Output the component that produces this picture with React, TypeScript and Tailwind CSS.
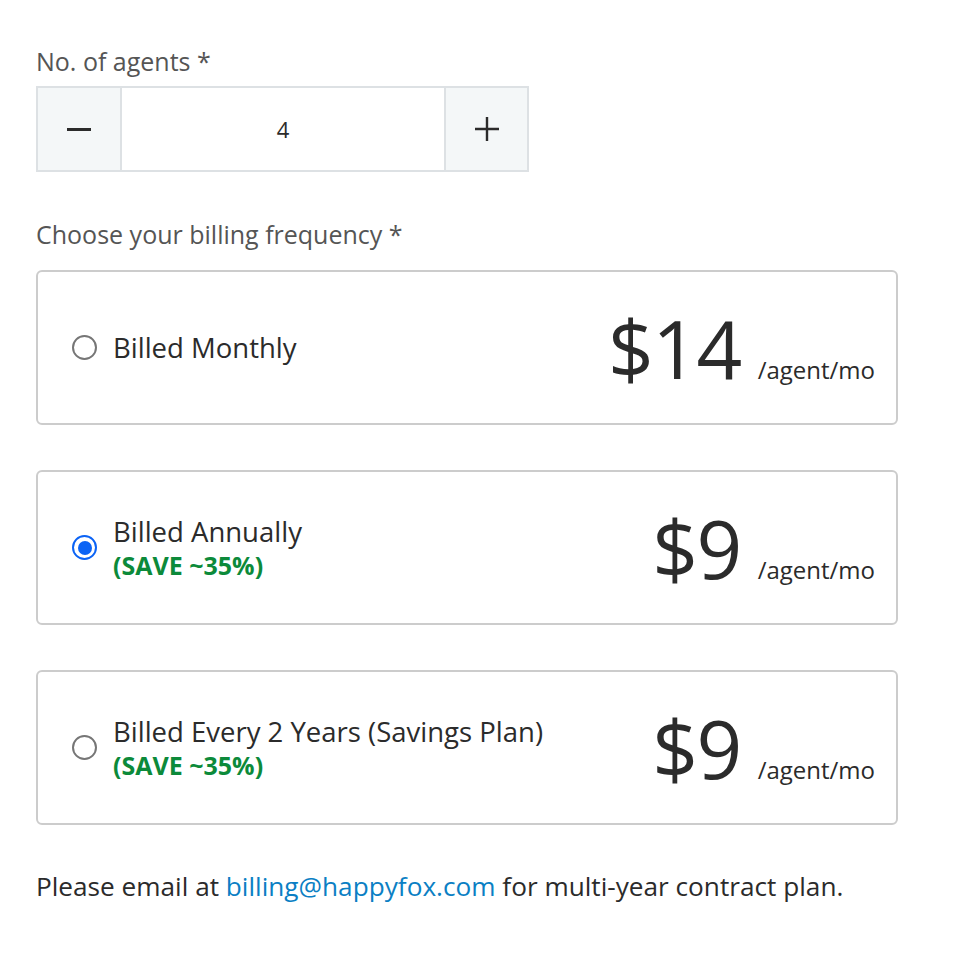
import { useState } from 'react';

const plans = [
  { id: 'monthly', label: 'Billed Monthly', save: '', price: '$14' },
  { id: 'annual', label: 'Billed Annually', save: '(SAVE ~35%)', price: '$9' },
  { id: 'biennial', label: 'Billed Every 2 Years (Savings Plan)', save: '(SAVE ~35%)', price: '$9' },
];

function Radio({ checked }: { checked: boolean }) {
  return checked ? (
    <span className="flex h-[25px] w-[25px] shrink-0 items-center justify-center rounded-full border-[2.5px] border-[#0b63f5]">
      <span className="h-[14px] w-[14px] rounded-full bg-[#0b63f5]" />
    </span>
  ) : (
    <span className="h-[25px] w-[25px] shrink-0 rounded-full border-2 border-[#767676]" />
  );
}

export default function App() {
  const [agents, setAgents] = useState(4);
  const [plan, setPlan] = useState('annual');

  return (
    <div className="min-h-screen bg-white pl-[36px] pt-[45px] text-[#2b2b2b]" style={{ fontFamily: '"Open Sans", "Noto Sans", sans-serif' }}>
      <div className="w-[862px]">
        <label className="block text-[25px] leading-[32px] text-[#555]">No. of agents *</label>
        <div className="mt-[9px] flex h-[86px] w-[493px] border-2 border-[#dde1e4]">
          <button
            className="flex w-[82px] items-center justify-center bg-[#f4f7f8]"
            onClick={() => setAgents(Math.max(1, agents - 1))}
          >
            <span className="h-[3px] w-[24px] bg-[#2b2b2b]" />
          </button>
          <div className="flex flex-1 items-center justify-center border-x-2 border-[#dde1e4] text-[22px]">{agents}</div>
          <button
            className="flex w-[81px] items-center justify-center bg-[#f4f7f8]"
            onClick={() => setAgents(agents + 1)}
          >
            <svg width="26" height="26" viewBox="0 0 26 26">
              <path d="M13 1v24M1 13h24" stroke="#2b2b2b" strokeWidth="2.4" />
            </svg>
          </button>
        </div>

        <label className="mt-[46px] block text-[25px] leading-[32px] text-[#555]">Choose your billing frequency *</label>

        <div className="mt-[20px] flex flex-col gap-[45px]">
          {plans.map((p) => (
            <div
              key={p.id}
              onClick={() => setPlan(p.id)}
              className="flex h-[155px] cursor-pointer items-center rounded-[6px] border-2 border-[#cccccc] pl-[34px] pr-[21px]"
            >
              <Radio checked={plan === p.id} />
              <div className="ml-[16px] flex-1">
                <div className="text-[27.5px] leading-[34px] text-[#2b2b2b]">{p.label}</div>
                {p.save && <div className="text-[25px] font-bold leading-[32px] text-[#0c8a3a]">{p.save}</div>}
              </div>
              <div className="flex items-baseline">
                <span className="text-[80px] leading-[90px] tracking-[-1.5px] text-[#2b2b2b]">{p.price}</span>
                <span className="ml-[17px] text-[24px] text-[#2b2b2b]">/agent/mo</span>
              </div>
            </div>
          ))}
        </div>

        <p className="mt-[44px] text-[26.2px] leading-[34px] text-[#2b2b2b]">
          Please email at <a className="text-[#0b7fc4]" href="#">billing@happyfox.com</a> for multi-year contract plan.
        </p>
      </div>
    </div>
  );
}
